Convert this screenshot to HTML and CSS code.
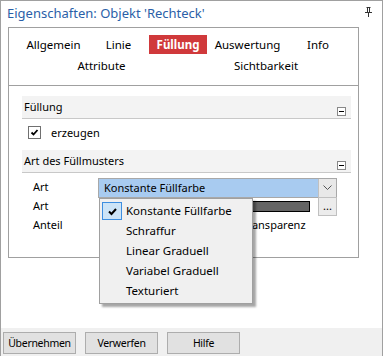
FILE: index.html
```html
<!DOCTYPE html>
<html>
<head>
<meta charset="utf-8">
<link rel="stylesheet" href="styles.css">
</head>
<body>
<div class="window">
  <div class="titlebar">
    <span class="title">Eigenschaften: Objekt 'Rechteck'</span>
    <svg class="pin" width="7" height="10" viewBox="0 0 7 10">
      <path d="M1.5 0.5h4M2.5 0.5v5M4.5 0.5v5M0 5.5h7M3.5 5.5v4.5" stroke="#333" stroke-width="1" fill="none"/>
    </svg>
  </div>
  <div class="panel">
    <div class="tabs">
      <div class="tabrow">
        <span class="tab t-allg">Allgemein</span>
        <span class="tab t-linie">Linie</span>
        <span class="tab t-fuell active">Füllung</span>
        <span class="tab t-ausw">Auswertung</span>
        <span class="tab t-info">Info</span>
      </div>
      <div class="tabrow">
        <span class="tab t-attr">Attribute</span>
        <span class="tab t-sicht">Sichtbarkeit</span>
      </div>
    </div>
    <div class="content">
      <div class="sec-head"><span>Füllung</span><span class="collapse"></span></div>
      <div class="check-row">
        <span class="checkbox">
          <svg width="9" height="9" viewBox="0 0 9 9"><path d="M1.5 4.5l2 2 4-4.5" stroke="#000" stroke-width="1.8" fill="none"/></svg>
        </span>
        <span>erzeugen</span>
      </div>
      <div class="sec-head"><span>Art des Füllmusters</span><span class="collapse"></span></div>
      <div class="prop-row">
        <span class="label">Art</span>
        <div class="combo">
          <span class="combo-text">Konstante Füllfarbe</span>
          <span class="combo-btn">
            <svg width="9" height="5" viewBox="0 0 9 5"><path d="M0.5 0.5l4 4 4-4" stroke="#555" stroke-width="1" fill="none"/></svg>
          </span>
        </div>
      </div>
      <div class="prop-row">
        <span class="label">Art</span>
        <div class="colorfield">
          <span class="colorbar"></span>
          <span class="dots">...</span>
        </div>
      </div>
      <div class="prop-row">
        <span class="label">Anteil</span>
        <span class="trans">Transparenz</span>
      </div>
    </div>
  </div>
  <div class="spacer"></div>
  <div class="footer">
    <button class="btn">Übernehmen</button>
    <button class="btn">Verwerfen</button>
    <button class="btn">Hilfe</button>
  </div>
  <div class="dropdown">
    <div class="item">
      <span class="check-mark">
        <svg width="11" height="11" viewBox="0 0 11 11"><path d="M2 5.5l2.5 2.5 4.5-5" stroke="#000" stroke-width="2" fill="none"/></svg>
      </span>
      <span>Konstante Füllfarbe</span>
    </div>
    <div class="item"><span class="check-space"></span><span>Schraffur</span></div>
    <div class="item"><span class="check-space"></span><span>Linear Graduell</span></div>
    <div class="item"><span class="check-space"></span><span>Variabel Graduell</span></div>
    <div class="item"><span class="check-space"></span><span>Texturiert</span></div>
  </div>
</div>
</body>
</html>
```
FILE: styles.css
```css
* { box-sizing: border-box; }
html, body { margin: 0; padding: 0; background: #fff; }
body {
  font-family: "Noto Sans", "Open Sans", sans-serif;
  font-size: 11px;
  color: #000;
}
.window {
  position: relative;
  width: 383px;
  height: 356px;
  border: 1px solid #a0a0a0;
  border-bottom: none;
  display: flex;
  flex-direction: column;
  background: #fff;
}
.titlebar {
  height: 26px;
  display: flex;
  align-items: center;
  justify-content: space-between;
  padding: 0 10px 2px 6px;
}
.title {
  color: #2b5fa8;
  font-size: 13px;
}
.pin { margin-top: -2px; }
.panel {
  margin-left: 7px;
  width: 351px;
  border: 1px solid #a0a0a0;
  padding-bottom: 22px;
}
.tabs {
  height: 58px;
  border-bottom: 1px solid #a0a0a0;
  padding-top: 7px;
}
.tabrow {
  display: flex;
  height: 19px;
  margin-bottom: 2px;
}
.tab {
  display: flex;
  align-items: center;
  justify-content: center;
  height: 19px;
  white-space: nowrap;
  font-size: 11.5px;
}
.t-allg { width: 67px; margin-left: 11px; }
.t-linie { width: 37px; margin-left: 13px; }
.t-fuell { width: 58px; margin-left: 12px; }
.t-ausw { width: 77px; margin-left: 2px; }
.t-info { width: 34px; margin-left: 15px; }
.t-attr { width: 61px; margin-left: 62px; }
.t-sicht { width: 76px; margin-left: 96px; }
.tab.active {
  background: #d0393b;
  color: #fff;
  font-weight: bold;
}
.content {
  padding: 10px 7px 0 13px;
}
.sec-head {
  height: 23px;
  background: #f3f3f3;
  border-bottom: 1px solid #c8c8c8;
  display: flex;
  justify-content: space-between;
  align-items: flex-start;
  padding: 3px 5px 0 2px;
}
.collapse {
  width: 9px;
  height: 9px;
  margin-top: 8px;
  border: 1px solid #888;
  background: #fff;
  position: relative;
}
.collapse::after {
  content: "";
  position: absolute;
  left: 1px;
  top: 3px;
  width: 5px;
  height: 1px;
  background: #000;
}
.check-row {
  height: 31px;
  display: flex;
  align-items: flex-start;
  padding: 7px 0 0 6px;
  gap: 10px;
}
.checkbox {
  width: 13px;
  height: 13px;
  border: 1px solid #707070;
  display: flex;
  align-items: center;
  justify-content: center;
  background: #fff;
}
.check-row span:last-child { margin-top: -1px; }
.prop-row {
  height: 19px;
  display: flex;
  align-items: center;
}
.content > .sec-head + .prop-row { margin-top: 5px; }
.label {
  width: 76px;
  padding-left: 11px;
  margin-top: -2px;
}
.combo {
  width: 239px;
  height: 20px;
  border: 1px solid #a8a8a8;
  display: flex;
  background: #a8cbf0;
}
.combo-text {
  flex: 1;
  padding-left: 5px;
  line-height: 17px;
}
.combo-btn {
  width: 18px;
  border-left: 1px solid #c0c0c0;
  background: #e8e8e8;
  display: flex;
  align-items: center;
  justify-content: center;
}
.colorfield {
  width: 239px;
  height: 19px;
  display: flex;
  align-items: center;
}
.colorbar {
  flex: 1;
  height: 11px;
  background: #646464;
  border: 1px solid #000;
  margin: 0 8px 0 2px;
}
.dots {
  width: 19px;
  height: 19px;
  border: 1px solid #c0c0c0;
  background: #ececec;
  display: flex;
  align-items: center;
  justify-content: center;
  line-height: 1;
  padding-bottom: 3px;
}
.trans {
  margin-left: 144px;
  margin-top: -2px;
}
.spacer { flex: 1; }
.footer {
  height: 28px;
  background: #f0f0f0;
  display: flex;
  gap: 9px;
  padding: 4px 0 0 2px;
}
.btn {
  width: 73px;
  height: 22px;
  border: 1px solid #adadad;
  background: #e1e1e1;
  font-family: inherit;
  font-size: 10.5px;
  letter-spacing: -0.3px;
  color: #000;
  padding: 0;
}
.dropdown {
  position: absolute;
  left: 98px;
  top: 197px;
  width: 154px;
  height: 106px;
  background: #f0f0f0;
  border: 1px solid #a0a0a0;
  box-shadow: 3px 3px 2px rgba(0,0,0,0.35);
  padding: 2px 0 0 2px;
}
.item {
  height: 20px;
  display: flex;
  align-items: center;
  gap: 4px;
  font-size: 11.5px;
}
.check-mark {
  width: 20px;
  height: 18px;
  border: 1px solid #3d8ee0;
  background: #cce4f7;
  display: flex;
  align-items: center;
  justify-content: center;
}
.check-space { width: 20px; }
.item span:last-child { margin-top: -1px; }
```
